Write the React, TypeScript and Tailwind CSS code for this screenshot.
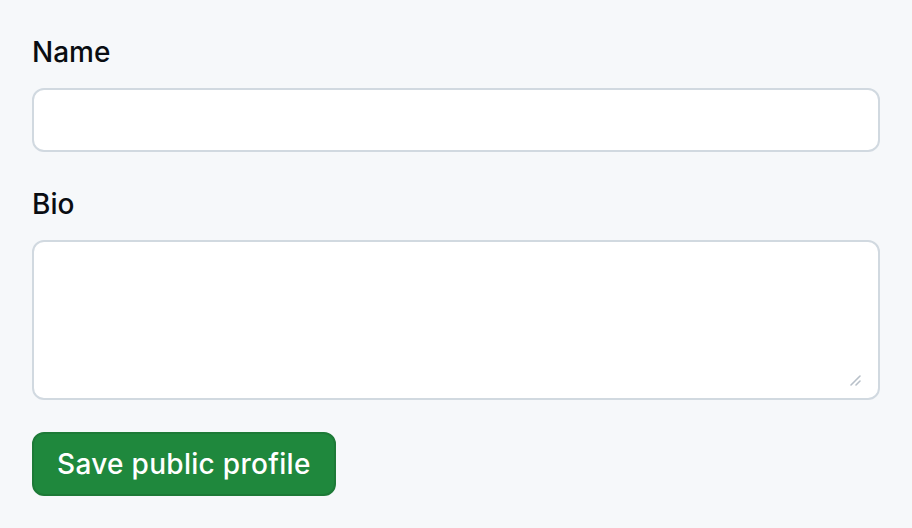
import { useState } from 'react';

export default function App() {
  const [name, setName] = useState('');
  const [bio, setBio] = useState('');

  return (
    <div className="min-h-[528px] w-full bg-[#f6f8fa] px-8 pt-8 font-['Inter','Liberation_Sans',sans-serif] text-[#0a0d12]">
      <form onSubmit={(e) => e.preventDefault()}>
        <div>
          <label htmlFor="name" className="block text-[28px] font-medium leading-[40px]">
            Name
          </label>
          <input
            id="name"
            type="text"
            value={name}
            onChange={(e) => setName(e.target.value)}
            className="mt-4 block h-16 w-full rounded-xl border-2 border-[#d1d9e0] bg-white px-6 text-[28px] outline-none"
          />
        </div>

        <div className="mt-8">
          <label htmlFor="bio" className="block text-[28px] font-medium leading-[40px]">
            Bio
          </label>
          <div className="relative mt-4">
            <textarea
              id="bio"
              value={bio}
              onChange={(e) => setBio(e.target.value)}
              className="block h-40 w-full resize-none rounded-xl border-2 border-[#d1d9e0] bg-white px-6 py-4 text-[28px] outline-none"
            />
            <svg
              className="pointer-events-none absolute bottom-[14px] right-[18px]"
              width="12"
              height="12"
              viewBox="0 0 12 12"
            >
              <path d="M1 11L10 2M6 11L10 7" stroke="#b8c0c9" strokeWidth="1.6" strokeLinecap="round" />
            </svg>
          </div>
        </div>

        <button
          type="submit"
          className="mt-8 flex h-16 items-center rounded-xl border-2 border-[#1d7a37] bg-[#1f883d] px-[23px] text-[28px] font-medium tracking-[0.3px] text-white"
        >
          Save public profile
        </button>
      </form>
    </div>
  );
}
